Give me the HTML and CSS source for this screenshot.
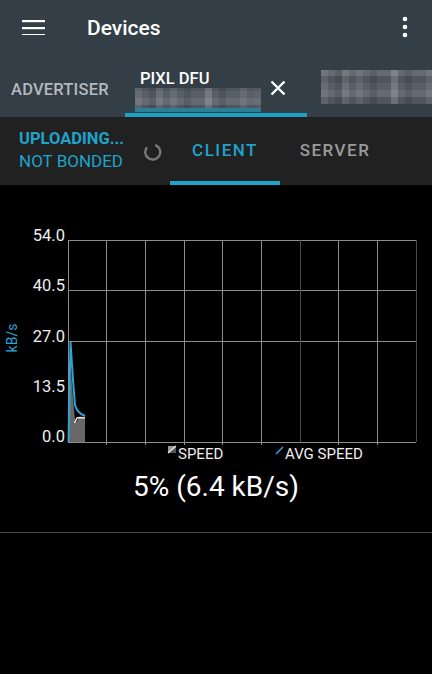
FILE: index.html
```html
<!DOCTYPE html>
<html lang="en">
<head>
    <meta charset="UTF-8">
    <meta name="viewport" content="width=device-width, initial-scale=1.0">
    <title>Devices</title>
    <link rel="stylesheet" href="styles.css">
</head>
<body>
    <header class="appbar">
        <div class="toolbar">
            <svg class="menu-icon" width="23" height="16" viewBox="0 0 23 16">
                <rect x="0" y="1" width="23" height="2.2" fill="#fff"/>
                <rect x="0" y="8" width="23" height="2.2" fill="#fff"/>
                <rect x="0" y="15" width="23" height="2.2" fill="#fff"/>
            </svg>
            <h1 class="title">Devices</h1>
            <svg class="kebab" width="6" height="22" viewBox="0 0 6 22">
                <circle cx="3" cy="3" r="2.3" fill="#fff"/>
                <circle cx="3" cy="11" r="2.3" fill="#fff"/>
                <circle cx="3" cy="19" r="2.3" fill="#fff"/>
            </svg>
        </div>

        <!-- Device tabs -->
        <div class="tabs">
            <div class="tab tab-plain">ADVERTISER</div>
            <div class="tab tab-active">
                <div class="tab-label">
                    <span class="tab-name">PIXL DFU</span>
                    <span class="blur blur-sub"></span>
                </div>
                <svg class="close-icon" width="16" height="16" viewBox="0 0 16 16">
                    <path d="M1.5 1.5 L14.5 14.5 M14.5 1.5 L1.5 14.5" stroke="#fff" stroke-width="2.4" fill="none"/>
                </svg>
            </div>
            <div class="tab tab-more">
                <span class="blur blur-wide"></span>
            </div>
        </div>
    </header>

    <section class="status">
        <div class="state">
            <div class="state-main">UPLOADING...</div>
            <div class="state-sub">NOT BONDED</div>
        </div>
        <svg class="spinner" width="18" height="18" viewBox="0 0 18 18">
            <path d="M11.3 2 A7.5 7.5 0 1 1 3 4.2" stroke="#777" stroke-width="2.4" fill="none"/>
        </svg>
        <nav class="modes">
            <span class="mode mode-active">CLIENT</span>
            <span class="mode">SERVER</span>
        </nav>
    </section>

    <main class="chart-area">
        <svg class="chart" width="432" height="251" viewBox="0 0 432 251">
            <!-- grid -->
            <g stroke="#8c8c8c" stroke-width="1">
                <line x1="68" y1="20.5" x2="416" y2="20.5"/>
                <line x1="68" y1="70.5" x2="416" y2="70.5"/>
                <line x1="68" y1="121.5" x2="416" y2="121.5"/>
                <line x1="68" y1="222.5" x2="416" y2="222.5"/>
                <line x1="68.5" y1="20" x2="68.5" y2="223"/>
                <line x1="106.5" y1="20" x2="106.5" y2="225"/>
                <line x1="145.5" y1="20" x2="145.5" y2="225"/>
                <line x1="184.5" y1="20" x2="184.5" y2="225"/>
                <line x1="222.5" y1="20" x2="222.5" y2="225"/>
                <line x1="261.5" y1="20" x2="261.5" y2="225"/>
                <line x1="338.5" y1="20" x2="338.5" y2="225"/>
                <line x1="377.5" y1="20" x2="377.5" y2="225"/>
            </g>
            <g stroke="#4a4a4a" stroke-width="1">
                <line x1="300.5" y1="20" x2="300.5" y2="222"/>
                <line x1="416.5" y1="20" x2="416.5" y2="222"/>
            </g>

            <!-- y axis -->
            <g class="axis-label" text-anchor="end">
                <text x="65" y="21">54.0</text>
                <text x="65" y="71">40.5</text>
                <text x="65" y="122">27.0</text>
                <text x="65" y="172">13.5</text>
                <text x="65" y="222">0.0</text>
            </g>
            <text class="axis-unit" transform="translate(12 118) rotate(-90)" text-anchor="middle" dominant-baseline="central">kB/s</text>

            <!-- speed -->
            <path d="M68.5 222 L69.5 175 L71 150 L73 178 L75 200 L76.5 202 L79 197 L85 198 L85 222 Z" fill="#676767"/>
            <path d="M74.5 203 L77 198 L80 197.5 L85 198" stroke="#e6e6e6" stroke-width="1.5" fill="none"/>

            <!-- avg speed -->
            <path d="M68.5 222 L70.5 122 L73 160 L75 185 Q77 193 85 196" stroke="#2ba4d8" stroke-width="2" fill="none"/>

            <!-- legend -->
            <rect x="168" y="226" width="8" height="7" fill="#555"/>
            <path d="M168 233 L176 226 L168 226 Z" fill="#9a9a9a"/>
            <line x1="168" y1="233" x2="176" y2="226" stroke="#eee" stroke-width="1.2"/>
            <text class="legend" x="178" y="239">SPEED</text>
            <line x1="276" y1="234" x2="283" y2="227" stroke="#2ba4d8" stroke-width="1.6"/>
            <text class="legend" x="285" y="239">AVG SPEED</text>
        </svg>

        <div class="progress">5% (6.4 kB/s)</div>
    </main>

    <hr class="divider">
</body>
</html>
```

FILE: styles.css
```css
body {
    margin: 0;
    background-color: #000000;
    font-family: Roboto, "Noto Sans", sans-serif;
    color: #ffffff;
    width: 432px;
    height: 674px;
    overflow: hidden;
}

.appbar {
    background-color: #343e47;
}

.toolbar {
    display: flex;
    align-items: center;
    height: 56px;
}

.menu-icon {
    margin-left: 22px;
    margin-top: -2px;
}

.title {
    margin: 0 0 0 42px;
    font-size: 21px;
    font-weight: 500;
    line-height: 24px;
    margin-top: -1px;
}

.kebab {
    margin-left: auto;
    margin-right: 24px;
    margin-top: -2px;
}

.tabs {
    display: flex;
    height: 61px;
}

.tab {
    box-sizing: border-box;
    display: flex;
    font-size: 16.5px;
    font-weight: 500;
    line-height: 19px;
}

.tab-plain {
    width: 125px;
    padding-left: 11px;
    padding-top: 24px;
    color: #b4b9bd;
    letter-spacing: 0.2px;
}

.tab-active {
    width: 182px;
    padding-top: 13px;
    border-bottom: 4px solid #1ba0c6;
}

.tab-label {
    display: flex;
    flex-direction: column;
    margin-left: 10px;
    width: 126px;
}

.tab-name {
    padding-left: 5px;
    color: #ffffff;
}

.close-icon {
    margin-left: 9px;
    margin-top: 11px;
}

.tab-more {
    flex: 1;
    padding-left: 14px;
    padding-top: 14px;
}

/* pixelated placeholder for hidden device names */
.blur {
    display: block;
    background-color: #585f66;
    background-image:
        repeating-linear-gradient(90deg, rgba(255, 255, 255, 0.08) 0 7px, transparent 7px 14px, rgba(0, 0, 0, 0.1) 14px 21px, transparent 21px 35px),
        repeating-linear-gradient(0deg, rgba(0, 0, 0, 0.1) 0 7px, rgba(255, 255, 255, 0.07) 7px 14px, transparent 14px 21px),
        repeating-linear-gradient(90deg, transparent 0 21px, rgba(255, 255, 255, 0.1) 21px 28px, transparent 28px 49px);
}

.blur-sub {
    height: 24px;
    box-shadow: inset 0 -4px 0 #2a7f97;
}

.blur-wide {
    width: 111px;
    height: 34px;
}

.status {
    display: flex;
    height: 68px;
    background-color: #212121;
}

.state {
    box-sizing: border-box;
    width: 144px;
    padding-left: 19px;
    padding-top: 12px;
    color: #1fa3cb;
    font-size: 16.5px;
    line-height: 19px;
}

.state-main {
    font-weight: 700;
}

.state-sub {
    margin-top: 4px;
    font-size: 17px;
}

.spinner {
    align-self: center;
    margin-top: 1px;
    margin-right: 8px;
}

.modes {
    display: flex;
}

.mode {
    box-sizing: border-box;
    width: 110px;
    display: flex;
    align-items: center;
    justify-content: center;
    padding-top: 1px;
    font-size: 17px;
    font-weight: 500;
    letter-spacing: 1.5px;
    color: #9a9a9a;
    border-bottom: 4px solid transparent;
}

.mode-active {
    color: #1fa3cb;
    border-bottom-color: #1fa3cb;
}

.chart-area {
    padding-top: 35px;
}

.chart {
    display: block;
}

.axis-label text {
    font-family: Roboto, sans-serif;
    font-size: 16.5px;
    fill: #eeeeee;
}

.axis-unit {
    font-family: Roboto, sans-serif;
    font-size: 14px;
    fill: #2ba4d8;
}

.legend {
    font-family: Roboto, sans-serif;
    font-size: 15px;
    fill: #eeeeee;
}

.progress {
    text-align: center;
    font-size: 28px;
    line-height: 32px;
}

.divider {
    margin: 29px 0 0;
    border: none;
    height: 1px;
    background-color: #4a4a4a;
}
```
